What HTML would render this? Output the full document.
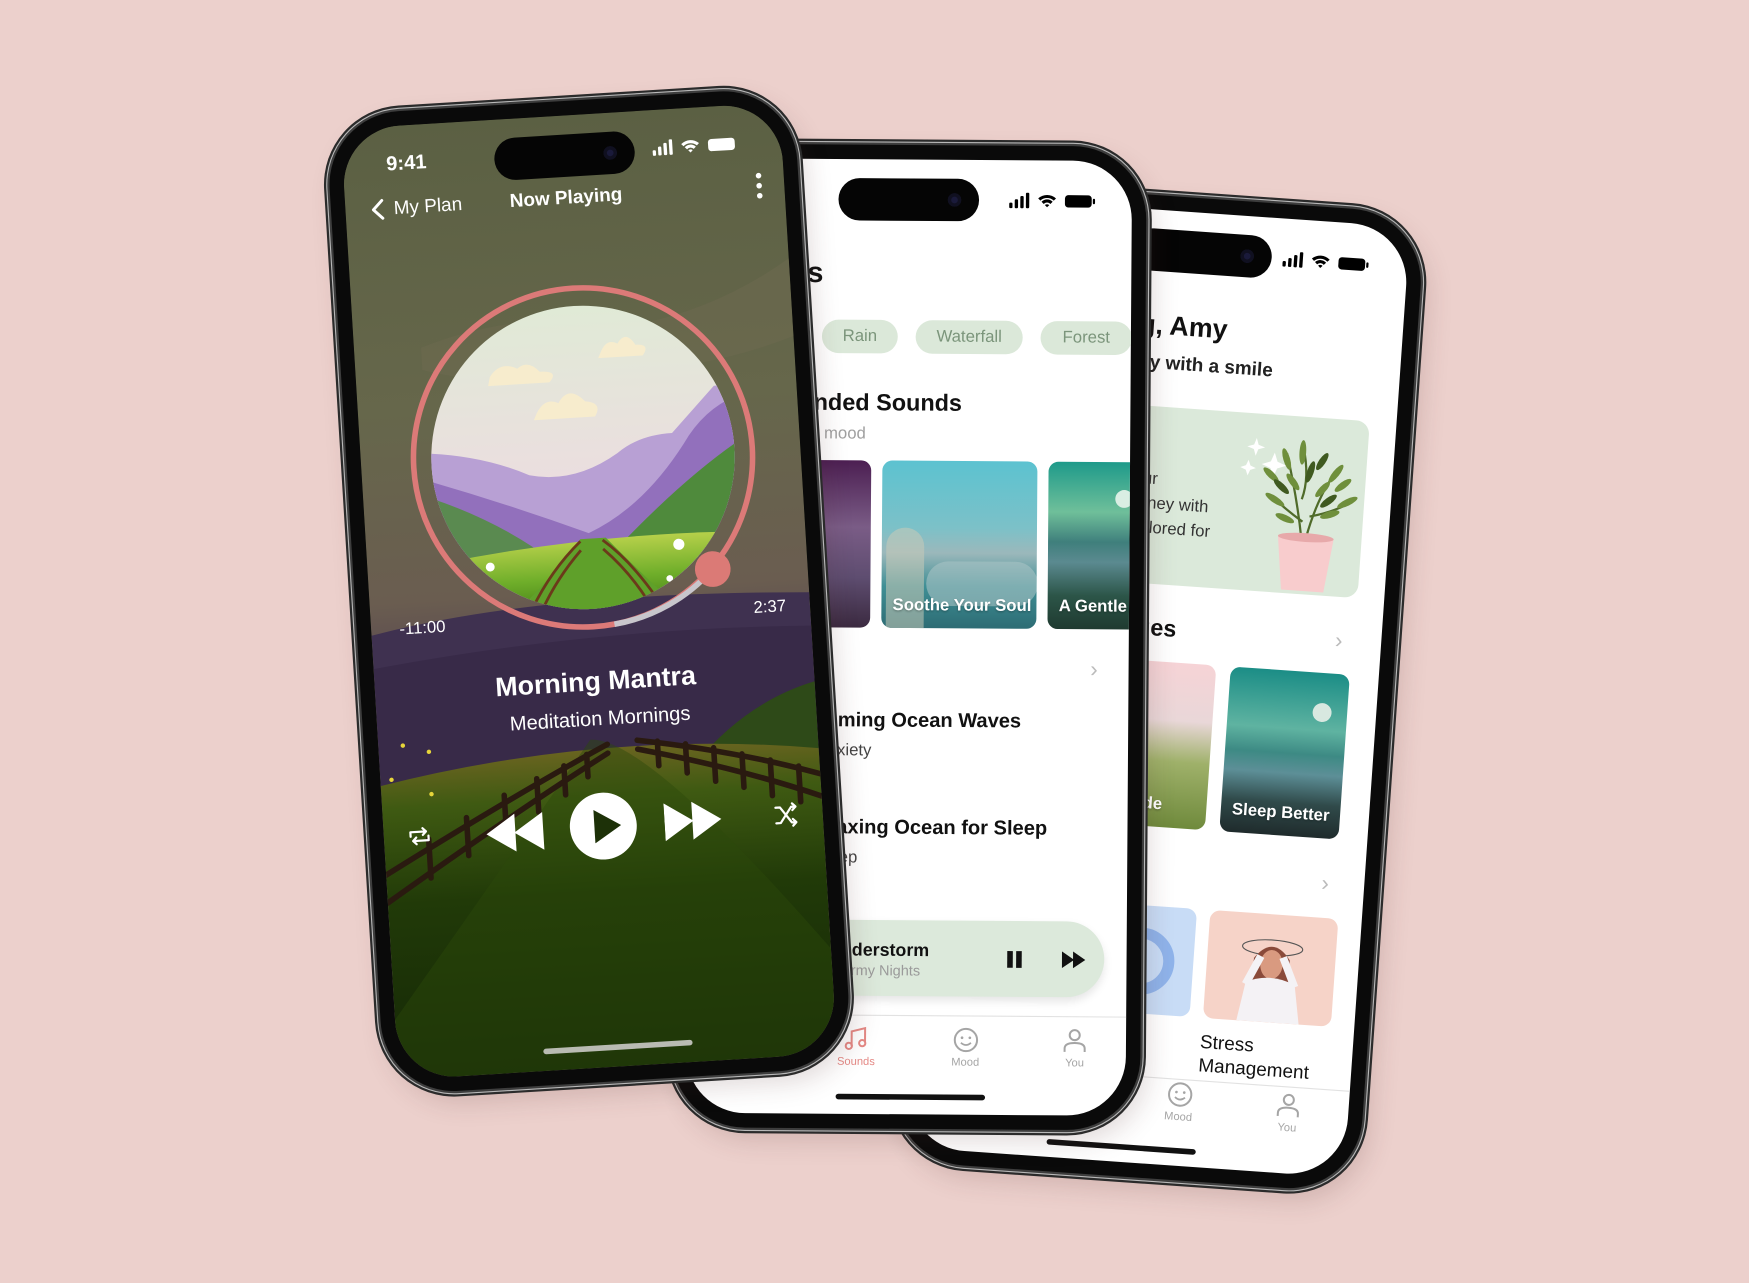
<!DOCTYPE html>
<html><head><meta charset="utf-8">
<style>
*{margin:0;padding:0;box-sizing:border-box}
html,body{width:1749px;height:1283px;overflow:hidden;background:#ecd0cc;font-family:"Liberation Sans",sans-serif}
#stage{position:absolute;left:0;top:0;width:1568px;height:1150px;transform:scale(1.11543);transform-origin:0 0}
.phone{position:absolute;width:420px;height:880px;border-radius:66px;background:#0a0a0a;box-shadow:0 0 0 2px #3d3d3d,0 0 0 3px #b8b8b8,0 0 0 5px #2b2b2b,6px 10px 24px rgba(80,40,40,.18)}
.screen{position:absolute;left:13px;top:13px;right:13px;bottom:13px;border-radius:53px;overflow:hidden;background:#fff}
.abs{position:absolute}
.island{position:absolute;width:126px;height:38px;border-radius:19px;background:#050505}
.island:after{content:"";position:absolute;right:16px;top:13px;width:12px;height:12px;border-radius:50%;background:#1a1a3a;box-shadow:inset 0 0 0 3px #101020}
.r{position:absolute;white-space:nowrap;transform:translateY(-50%)}
.c{position:absolute;white-space:nowrap;transform:translate(-50%,-50%)}
.chip{position:absolute;height:30px;border-radius:15px;background:#dbe8d9;color:#7b957b;font-size:15px;text-align:center;line-height:30px}
.card{position:absolute;border-radius:9px;overflow:hidden}
.cl{position:absolute;left:10px;bottom:12px;color:#fff;font-weight:600;font-size:15px;white-space:nowrap;text-shadow:0 1px 2px rgba(0,0,0,.3)}
.tab{position:absolute;transform:translateX(-50%);text-align:center;font-size:10px;color:#a5a5a5}
</style></head><body>
<div id="stage">

<!-- RIGHT PHONE -->
<div class="phone" style="left:828px;top:176px;transform:rotate(4deg)">
 <div class="screen">
  <div class="island" style="left:146px;top:17px"></div>
  <svg class="abs" style="left:282px;top:29px" width="78" height="15" viewBox="0 0 78 15"><g fill="#000"><rect x="0" y="9" width="3" height="5" rx="1"/><rect x="5" y="6" width="3" height="8" rx="1"/><rect x="10" y="3" width="3" height="11" rx="1"/><rect x="15" y="0" width="3" height="14" rx="1"/><path d="M26 5a12 12 0 0 1 16 0l-2 2a9 9 0 0 0-12 0z M29 8a7 7 0 0 1 10 0l-2 2a4 4 0 0 0-6 0z M32 11a3 3 0 0 1 4 0l-2 2z"/><rect x="50" y="2" width="24" height="11" rx="3"/><rect x="75" y="5" width="2" height="5" rx="1"/></g></svg>
  <div class="r" style="right:157px;top:104px;font-size:24px;font-weight:600;color:#111">Good Morning, Amy</div>
  <div class="r" style="right:114px;top:137px;font-size:17px;font-weight:600;color:#222">Start your day with a smile</div>
  <div class="abs" style="left:10px;top:176px;width:360px;height:159px;border-radius:12px;background:#dbe9da"></div>
  <div class="r" style="right:210px;top:241px;font-size:15px;color:#333">Begin your</div>
  <div class="r" style="right:163px;top:263px;font-size:15px;color:#333">wellness journey with</div>
  <div class="r" style="right:160px;top:285px;font-size:15px;color:#333">activities tailored for</div>
  <svg class="abs" style="left:250px;top:190px" width="120" height="150" viewBox="0 0 120 150">
   <g fill="#fff"><path d="M20 8l2 6 6 2-6 2-2 6-2-6-6-2 6-2z"/><path d="M37 20l3 8 8 3-8 3-3 8-3-8-8-3 8-3z"/><path d="M14 28l2 5 5 2-5 2-2 5-2-5-5-2 5-2z"/></g>
   <g stroke="#4f6b2a" stroke-width="2" fill="none"><path d="M66 95 Q60 60 48 20"/><path d="M70 95 Q78 55 95 30"/><path d="M66 80 Q50 70 38 60"/><path d="M72 75 Q92 70 108 60"/><path d="M64 60 Q70 40 62 12"/></g>
   <g fill="#6f8f3c"><ellipse cx="48" cy="25" rx="3" ry="10" transform="rotate(-20 48 25)"/><ellipse cx="62" cy="18" rx="3" ry="11"/><ellipse cx="93" cy="35" rx="3" ry="10" transform="rotate(35 93 35)"/><ellipse cx="40" cy="62" rx="3" ry="10" transform="rotate(-60 40 62)"/><ellipse cx="105" cy="60" rx="3" ry="10" transform="rotate(60 105 60)"/><ellipse cx="55" cy="45" rx="3" ry="9" transform="rotate(-40 55 45)"/><ellipse cx="82" cy="50" rx="3" ry="9" transform="rotate(40 82 50)"/><ellipse cx="50" cy="78" rx="3" ry="9" transform="rotate(-70 50 78)"/><ellipse cx="90" cy="72" rx="3" ry="9" transform="rotate(70 90 72)"/><ellipse cx="100" cy="45" rx="3" ry="9" transform="rotate(50 100 45)"/><ellipse cx="35" cy="40" rx="3" ry="9" transform="rotate(-50 35 40)"/></g>
   <g fill="#3f5a20"><ellipse cx="70" cy="35" rx="3" ry="10" transform="rotate(15 70 35)"/><ellipse cx="80" cy="25" rx="3" ry="9" transform="rotate(30 80 25)"/><ellipse cx="45" cy="50" rx="3" ry="9" transform="rotate(-50 45 50)"/><ellipse cx="88" cy="60" rx="3" ry="9" transform="rotate(50 88 60)"/></g>
   <path d="M45 94 L95 94 L89 142 L51 142Z" fill="#f8cccd"/><ellipse cx="70" cy="94" rx="25" ry="4" fill="#e7a9aa"/>
  </svg>
  <div class="r" style="right:184px;top:375px;font-size:21px;font-weight:600;color:#111">Challenges</div>
  <div class="c" style="left:356px;top:375px;font-size:20px;color:#bbb">›</div>
  <div class="card" style="left:139px;top:404px;width:109px;height:148px;background:linear-gradient(#f6d3d6 0%,#e9d7d8 35%,#9fb16a 60%,#6f8a3c 100%)"><div class="cl">Solitude</div></div>
  <div class="card" style="left:261px;top:404px;width:107px;height:148px;background:linear-gradient(#1b8d86 0%,#5fb3a1 35%,#3d8a84 50%,#5d8f97 62%,#304a4a 80%,#1f2b2c 100%)"><div class="abs" style="left:76px;top:27px;width:17px;height:17px;border-radius:50%;background:#d8e8e0"></div><div class="cl">Sleep Better</div></div>
  <div class="c" style="left:359px;top:593px;font-size:20px;color:#bbb">›</div>
  <div class="card" style="left:139px;top:623px;width:107px;height:97px;background:#c8dcf6"><div class="abs" style="left:30px;top:20px;width:60px;height:60px;border-radius:50%;border:10px solid #8fb3ea"></div></div>
  <div class="card" style="left:258px;top:623px;width:115px;height:97px;background:#f6d3c8">
   <svg width="115" height="97" viewBox="0 0 115 97"><ellipse cx="58" cy="30" rx="27" ry="7" fill="none" stroke="#555" stroke-width="1"/><path d="M42 40 Q58 18 74 40 L76 70 L40 70Z" fill="#8a4a3a"/><ellipse cx="58" cy="45" rx="10" ry="13" fill="#d99a80"/><path d="M30 97 L36 62 Q58 52 80 62 L86 97Z" fill="#f4f2f5"/><path d="M36 64 L48 38 M80 64 L68 38" stroke="#f4f2f5" stroke-width="7"/></svg>
  </div>
  <div class="abs" style="left:257px;top:731px;font-size:17px;color:#111;line-height:21px">Stress<br>Management</div>
  <div class="abs" style="left:0;top:776px;width:394px;height:1px;background:#e2e2e2"></div>
  <div class="tab" style="left:242px;top:778px"><svg width="24" height="24" viewBox="0 0 24 24"><circle cx="12" cy="12" r="10" fill="none" stroke="#a5a5a5" stroke-width="1.8"/><circle cx="8.5" cy="10" r="1.2" fill="#a5a5a5"/><circle cx="15.5" cy="10" r="1.2" fill="#a5a5a5"/><path d="M7.5 14.5q4.5 4 9 0" fill="none" stroke="#a5a5a5" stroke-width="1.6"/></svg><div>Mood</div></div>
  <div class="tab" style="left:340px;top:781px"><svg width="22" height="24" viewBox="0 0 22 24"><circle cx="11" cy="7" r="4.5" fill="none" stroke="#a5a5a5" stroke-width="1.8"/><path d="M2 22v-3q0-5 9-5t9 5v3" fill="none" stroke="#a5a5a5" stroke-width="1.8"/></svg><div>You</div></div>
  <div class="abs" style="left:126px;top:838px;width:134px;height:5px;border-radius:3px;background:#111"></div>
 </div>
</div>

<!-- MIDDLE PHONE -->
<div class="phone" style="left:605px;top:130px;height:882px;transform:rotate(0.4deg)">
 <div class="screen">
  <div class="island" style="left:131px;top:17px"></div>
  <svg class="abs" style="left:284px;top:29px" width="78" height="15" viewBox="0 0 78 15"><g fill="#000"><rect x="0" y="9" width="3" height="5" rx="1"/><rect x="5" y="6" width="3" height="8" rx="1"/><rect x="10" y="3" width="3" height="11" rx="1"/><rect x="15" y="0" width="3" height="14" rx="1"/><path d="M26 5a12 12 0 0 1 16 0l-2 2a9 9 0 0 0-12 0z M29 8a7 7 0 0 1 10 0l-2 2a4 4 0 0 0-6 0z M32 11a3 3 0 0 1 4 0l-2 2z"/><rect x="50" y="2" width="24" height="11" rx="3"/><rect x="75" y="5" width="2" height="5" rx="1"/></g></svg>
  <div class="r" style="right:276px;top:102px;font-size:26px;font-weight:700;color:#111">Sounds</div>
  <div class="chip" style="left:117px;top:144px;width:68px">Rain</div>
  <div class="chip" style="left:201px;top:144px;width:96px">Waterfall</div>
  <div class="chip" style="left:313px;top:144px;width:82px">Forest</div>
  <div class="r" style="right:151px;top:219px;font-size:21px;font-weight:600;color:#111">Recommended Sounds</div>
  <div class="r" style="right:237px;top:246px;font-size:15px;color:#a0a0a0">Sounds for your mood</div>
  <div class="card" style="left:30px;top:270px;width:132px;height:150px;background:linear-gradient(#4c1f52,#7a5c86 40%,#5e4d70 70%,#3b2a40)"><div class="cl">Night Rain</div></div>
  <div class="card" style="left:172px;top:270px;width:139px;height:150px;background:linear-gradient(#5cc2d0 0%,#7cc1c8 40%,#9bb8bb 55%,#3f8f95 75%,#2d6c74 100%)"><div class="abs" style="left:4px;top:60px;width:34px;height:90px;border-radius:17px 17px 0 0;background:#c9cbb8;opacity:.55"></div><div class="abs" style="left:40px;top:90px;width:100px;height:40px;border-radius:20px;background:#a9c3c5;opacity:.6"></div><div class="cl">Soothe Your Soul</div></div>
  <div class="card" style="left:321px;top:270px;width:130px;height:150px;background:linear-gradient(#1e9a8a 0%,#6fbf9a 30%,#3f7f7c 48%,#5b8a90 60%,#2c5548 80%,#1f3a30 100%)"><div class="abs" style="left:60px;top:25px;width:16px;height:16px;border-radius:50%;background:#d9eee3"></div><div class="cl">A Gentle Breeze</div></div>
  <div class="c" style="left:363px;top:457px;font-size:20px;color:#bbb">›</div>
  <div class="r" style="right:96px;top:503px;font-size:18px;font-weight:600;color:#111">Calming Ocean Waves</div>
  <div class="r" style="right:230px;top:530px;font-size:15px;color:#444">Anxiety</div>
  <div class="r" style="right:72px;top:599px;font-size:18px;font-weight:600;color:#111">Relaxing Ocean for Sleep</div>
  <div class="r" style="right:242px;top:626px;font-size:15px;color:#444">Sleep</div>
  <div class="abs" style="left:10px;top:682px;width:364px;height:68px;border-radius:34px;background:#dce9db;box-shadow:0 4px 8px rgba(0,0,0,.1)"></div>
  <div class="r" style="right:177px;top:710px;font-size:16px;font-weight:600;color:#111">Thunderstorm</div>
  <div class="r" style="right:185px;top:727px;font-size:13px;color:#9a9a9a">Stormy Nights</div>
  <div class="abs" style="left:287px;top:709px;width:5px;height:15px;background:#111"></div><div class="abs" style="left:295px;top:709px;width:5px;height:15px;background:#111"></div>
  <svg class="abs" style="left:336px;top:709px" width="22" height="15" viewBox="0 0 22 15"><path d="M0 0L11 7.5L0 15Z M10 0L21 7.5L10 15Z" fill="#111"/></svg>
  <div class="abs" style="left:0;top:767px;width:394px;height:1px;background:#e2e2e2"></div>
  <div class="tab" style="left:152px;top:777px;color:#e58a86"><svg width="24" height="24" viewBox="0 0 24 24"><path d="M8 18V5l12-3v13" fill="none" stroke="#e58a86" stroke-width="1.8"/><circle cx="5.5" cy="18" r="2.8" fill="none" stroke="#e58a86" stroke-width="1.8"/><circle cx="17.5" cy="15.5" r="2.8" fill="none" stroke="#e58a86" stroke-width="1.8"/></svg><div>Sounds</div></div>
  <div class="tab" style="left:250px;top:777px"><svg width="24" height="24" viewBox="0 0 24 24"><circle cx="12" cy="12" r="10" fill="none" stroke="#a5a5a5" stroke-width="1.8"/><circle cx="8.5" cy="10" r="1.2" fill="#a5a5a5"/><circle cx="15.5" cy="10" r="1.2" fill="#a5a5a5"/><path d="M7.5 14.5q4.5 4 9 0" fill="none" stroke="#a5a5a5" stroke-width="1.6"/></svg><div>Mood</div></div>
  <div class="tab" style="left:348px;top:777px"><svg width="22" height="24" viewBox="0 0 22 24"><circle cx="11" cy="7" r="4.5" fill="none" stroke="#a5a5a5" stroke-width="1.8"/><path d="M2 22v-3q0-5 9-5t9 5v3" fill="none" stroke="#a5a5a5" stroke-width="1.8"/></svg><div>You</div></div>
  <div class="abs" style="left:134px;top:838px;width:134px;height:5px;border-radius:3px;background:#111"></div>
 </div>
</div>

<!-- LEFT PHONE -->
<div class="phone" style="left:318px;top:90px;transform:rotate(-3.5deg)">
 <div class="screen" style="background:#55583f">
  <svg class="abs" style="left:0;top:0" width="394" height="854" viewBox="0 0 394 854">
   <defs>
    <linearGradient id="sky" x1="0" y1="0" x2="0" y2="1"><stop offset="0" stop-color="#5b6043"/><stop offset=".3" stop-color="#66674b"/><stop offset=".5" stop-color="#6a5d50"/><stop offset=".55" stop-color="#5f4f50"/></linearGradient>
    <linearGradient id="grass" x1="0" y1="0" x2="0" y2="1"><stop offset="0" stop-color="#6a6420"/><stop offset=".15" stop-color="#3f5a12"/><stop offset=".45" stop-color="#213a08"/><stop offset="1" stop-color="#152806"/></linearGradient>
    <linearGradient id="asky" x1="0" y1="0" x2="0" y2="1"><stop offset="0" stop-color="#e0ead6"/><stop offset=".6" stop-color="#ecdde0"/><stop offset="1" stop-color="#e9d2de"/></linearGradient>
    <linearGradient id="afield" x1="0" y1="0" x2="0" y2="1"><stop offset="0" stop-color="#b6d04a"/><stop offset=".5" stop-color="#6fae2a"/><stop offset="1" stop-color="#3f7a14"/></linearGradient>
    <clipPath id="cc"><circle cx="199" cy="307" r="136"/></clipPath>
   </defs>
   <rect width="394" height="854" fill="url(#sky)"/>
   <path d="M60 200 Q150 170 260 190 Q330 180 394 140 L394 210 Q300 240 200 230 Q120 240 60 220Z" fill="#6e6a50" opacity=".5"/>
   <path d="M0 455 Q150 425 394 440 L394 600 L0 600Z" fill="#3f3150"/>
   <path d="M0 485 Q200 460 394 470 L394 600 L0 600Z" fill="#382a48"/>
   <path d="M280 590 Q330 535 394 520 L394 600Z" fill="#2e4a18"/>
   <path d="M0 590 Q200 552 394 580 L394 854 L0 854Z" fill="url(#grass)"/>
   <path d="M190 560 Q240 560 394 760 L394 854 L0 854 L0 800 Q120 650 190 560Z" fill="#2c4a0c" opacity=".45"/>
   <g stroke="#2a1a10" stroke-width="5" fill="none" stroke-linecap="round">
    <path d="M205 565 Q120 605 0 670"/><path d="M205 573 Q120 620 0 695"/>
    <path d="M232 563 Q320 578 394 603"/><path d="M232 571 Q320 593 394 623"/>
    <path d="M40 640v35 M75 623v34 M110 605v32 M140 592v30 M165 582v26 M186 573v20 M250 565v22 M275 569v26 M300 574v30 M325 581v30 M350 588v32 M375 595v32"/>
   </g>
   <g fill="#e6d53a"><circle cx="22" cy="555" r="2"/><circle cx="45" cy="562" r="2"/><circle cx="10" cy="585" r="2"/><circle cx="45" cy="600" r="2"/></g>
   <g clip-path="url(#cc)">
    <rect x="60" y="170" width="280" height="280" fill="url(#asky)"/>
    <path d="M120 230 q10-14 25-6 q10-8 20 4 q18 0 8 10 h-55z M220 215 q6-14 16-8 q8-12 16 2 q14 0 6 10 h-40z M160 265 q8-14 20-8 q10-16 24 0 q16 2 8 14 h-55z" fill="#f7eccd"/>
    <path d="M60 295 Q110 300 150 320 Q190 330 230 305 Q250 290 280 290 Q300 270 320 250 L340 250 L340 450 L60 450Z" fill="#b8a0d4"/>
    <path d="M60 320 Q130 345 200 375 Q250 355 290 300 Q310 270 340 260 L340 450 L60 450Z" fill="#9270bc"/>
    <path d="M60 335 Q110 355 150 385 L60 400Z" fill="#5a8a50"/>
    <path d="M230 385 Q290 330 340 300 L340 400Z" fill="#4f8a3c"/>
    <path d="M60 395 Q200 375 340 382 L340 450 L60 450Z" fill="url(#afield)"/>
    <path d="M192 380 Q205 380 215 380 Q250 420 280 450 L120 450 Q170 410 192 380Z" fill="#5fa02a"/>
    <g stroke="#6b3a1a" stroke-width="2.5" fill="none"><path d="M192 382 Q160 410 140 450"/><path d="M192 390 Q165 418 150 450"/><path d="M212 382 Q240 405 265 450"/><path d="M212 390 Q238 415 255 450"/></g>
    <g fill="#fff"><circle cx="110" cy="400" r="4"/><circle cx="280" cy="390" r="5"/><circle cx="125" cy="425" r="3"/><circle cx="270" cy="420" r="3"/></g>
   </g>
   <circle cx="199" cy="307" r="152" fill="none" stroke="#dc7a78" stroke-width="5"/>
   <path d="M309 414 A152 152 0 0 1 218 458" fill="none" stroke="#c8c6cc" stroke-width="5"/>
   <circle cx="309" cy="414" r="16" fill="#db7a76"/>
  </svg>
  <div class="island" style="left:136px;top:17px"></div>
  <div class="c" style="left:57px;top:34px;font-size:18px;font-weight:600;color:#fff">9:41</div>
  <svg class="abs" style="left:278px;top:27px" width="78" height="15" viewBox="0 0 78 15"><g fill="#fff"><rect x="0" y="9" width="3" height="5" rx="1"/><rect x="5" y="6" width="3" height="8" rx="1"/><rect x="10" y="3" width="3" height="11" rx="1"/><rect x="15" y="0" width="3" height="14" rx="1"/><path d="M26 5a12 12 0 0 1 16 0l-2 2a9 9 0 0 0-12 0z M29 8a7 7 0 0 1 10 0l-2 2a4 4 0 0 0-6 0z M32 11a3 3 0 0 1 4 0l-2 2z"/><rect x="50" y="2" width="24" height="11" rx="3"/></g></svg>
  <svg class="abs" style="left:22px;top:64px" width="14" height="20" viewBox="0 0 14 20"><path d="M11 2L3 10l8 8" fill="none" stroke="#fff" stroke-width="2.6" stroke-linecap="round" stroke-linejoin="round"/></svg>
  <div class="c" style="left:74px;top:74px;font-size:17px;color:#fff">My Plan</div>
  <div class="c" style="left:198px;top:74px;font-size:17px;font-weight:600;color:#fff">Now Playing</div>
  <div class="abs" style="left:369px;top:62px;width:5px;height:5px;border-radius:50%;background:#fff;box-shadow:0 9px 0 #fff,0 18px 0 #fff"></div>
  <div class="c" style="left:46px;top:451px;font-size:15px;color:#fff">-11:00</div>
  <div class="c" style="left:358px;top:451px;font-size:15px;color:#fff">2:37</div>
  <div class="c" style="left:198px;top:509px;font-size:24px;font-weight:700;color:#fff">Morning Mantra</div>
  <div class="c" style="left:200px;top:542px;font-size:18px;color:#fff">Meditation Mornings</div>
  <svg class="abs" style="left:20px;top:625px" width="24" height="24" viewBox="0 0 24 24"><path d="M4 12V8h14M15 5l3 3-3 3M20 12v4H6M9 19l-3-3 3-3" fill="none" stroke="#fff" stroke-width="2" stroke-linecap="round" stroke-linejoin="round"/></svg>
  <svg class="abs" style="left:92px;top:622px" width="52" height="34" viewBox="0 0 52 34"><path d="M26 0L0 17L26 34Z M51 0L25 17L51 34Z" fill="#fff"/></svg>
  <div class="abs" style="left:167px;top:608px;width:60px;height:60px;border-radius:50%;background:#fff"></div>
  <svg class="abs" style="left:187px;top:623px" width="26" height="30" viewBox="0 0 26 30"><path d="M2 0L26 15L2 30Z" fill="#1d3108"/></svg>
  <svg class="abs" style="left:252px;top:621px" width="52" height="34" viewBox="0 0 52 34"><path d="M0 0L26 17L0 34Z M25 0L51 17L25 34Z" fill="#fff"/></svg>
  <svg class="abs" style="left:349px;top:626px" width="24" height="24" viewBox="0 0 24 24"><path d="M3 5h4l10 14h4M3 19h4l10-14h4M18 2l3 3-3 3M18 16l3 3-3 3" fill="none" stroke="#fff" stroke-width="2" stroke-linecap="round" stroke-linejoin="round"/></svg>
  <div class="abs" style="left:131px;top:834px;width:134px;height:5px;border-radius:3px;background:#b9bbb3"></div>
 </div>
</div>

</div>
</body></html>
